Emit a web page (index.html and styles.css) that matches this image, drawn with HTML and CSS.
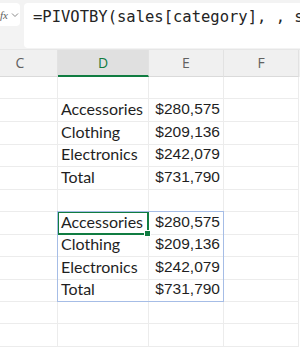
FILE: index.html
```html
<!DOCTYPE html>
<html lang="en">
<head>
  <meta charset="UTF-8" />
  <title>PIVOTBY</title>
  <link rel="stylesheet" href="styles.css">
</head>
<body>
<div class="toolbar">
  <div class="fx-box">
    <span class="fx">fx</span>
    <svg class="chev" width="8" height="6" viewBox="0 0 8 6"><path d="M1 1.5 L4 4.5 L7 1.5" fill="none" stroke="#8a8a8a" stroke-width="1"/></svg>
  </div>
  <div class="formula">=PIVOTBY(sales[category], , sales[amount], SUM)</div>
</div>

<div class="sheet">
  <div class="row head">
    <div class="hcell">C</div>
    <div class="hcell sel">D</div>
    <div class="hcell">E</div>
    <div class="hcell">F</div>
  </div>

  <div class="row"><div class="cell"></div><div class="cell"></div><div class="cell"></div><div class="cell"></div></div>
  <div class="row tall"><div class="cell"></div><div class="cell">Accessories</div><div class="cell num">$280,575</div><div class="cell"></div></div>
  <div class="row"><div class="cell"></div><div class="cell">Clothing</div><div class="cell num">$209,136</div><div class="cell"></div></div>
  <div class="row tall"><div class="cell"></div><div class="cell">Electronics</div><div class="cell num">$242,079</div><div class="cell"></div></div>
  <div class="row"><div class="cell"></div><div class="cell">Total</div><div class="cell num">$731,790</div><div class="cell"></div></div>
  <div class="row tall"><div class="cell"></div><div class="cell"></div><div class="cell"></div><div class="cell"></div></div>

  <!-- spilled copy, selected -->
  <div class="row"><div class="cell"></div><div class="cell active">Accessories</div><div class="cell num">$280,575</div><div class="cell"></div></div>
  <div class="row tall"><div class="cell"></div><div class="cell">Clothing</div><div class="cell num">$209,136</div><div class="cell"></div></div>
  <div class="row"><div class="cell"></div><div class="cell">Electronics</div><div class="cell num">$242,079</div><div class="cell"></div></div>
  <div class="row tall"><div class="cell"></div><div class="cell">Total</div><div class="cell num">$731,790</div><div class="cell"></div></div>
  <div class="row"><div class="cell"></div><div class="cell"></div><div class="cell"></div><div class="cell"></div></div>
  <div class="row tall"><div class="cell"></div><div class="cell"></div><div class="cell"></div><div class="cell"></div></div>

  <div class="spill"></div>
</div>
</body>
</html>
```

FILE: styles.css
```css
* { box-sizing: border-box; }
html, body { margin: 0; height: 100%; overflow: hidden; }
body {
  background: #fff;
  color: #1f1f1f;
  font-family: 'Liberation Sans', Arial, sans-serif;
}

.toolbar {
  height: 49px;
  background: #f3f3f3;
  display: flex;
  gap: 4px;
  padding-top: 3px;
  overflow: hidden;
}
.fx-box {
  width: 20px;
  height: 23px;
  background: #fff;
  border-radius: 0 4px 4px 0;
  display: flex;
  align-items: center;
  gap: 3px;
  flex-shrink: 0;
}
.fx {
  font-family: 'Liberation Serif', serif;
  font-style: italic;
  font-size: 11px;
  color: #616161;
  margin-left: 0;
}
.chev { margin-top: 1px; }
.formula {
  flex: 1;
  height: 45px;
  background: #fff;
  border-radius: 4px 0 0 4px;
  font-family: 'DejaVu Sans Mono', monospace;
  font-size: 15.5px;
  color: #242424;
  padding: 5px 0 0 9px;
  white-space: nowrap;
  overflow: hidden;
}

.sheet {
  position: relative;
  margin-left: -17px;
}
.row {
  display: grid;
  grid-template-columns: 75px 91px 75px 75px;
  height: 22px;
}
.row.tall { height: 23px; }

.head {
  height: 28px;
  background: #f0f0f0;
  border-top: 1px solid #e6e6e6;
}
.hcell {
  font-family: 'Open Sans', sans-serif;
  font-size: 14px;
  color: #616161;
  text-align: center;
  line-height: 25px;
  border-right: 1px solid #e2e2e2;
  border-bottom: 1px solid #dadada;
}
.hcell.sel {
  background: #e0e0e0;
  color: #107c41;
  border-bottom: 2px solid #107c41;
}

.cell {
  font-family: 'Lato', sans-serif;
  font-size: 16px;
  padding: 0 3px;
  display: flex;
  align-items: flex-end;
  padding-bottom: 3px;
  border-right: 1px solid #ececec;
  border-bottom: 1px solid #ececec;
  white-space: nowrap;
}
.cell.num {
  justify-content: flex-end;
  font-family: 'Liberation Sans', Arial, sans-serif;
  font-size: 15.5px;
}
.cell.active {
  position: relative;
}
.cell.active::before {
  content: '';
  position: absolute;
  left: -1px; top: -1px; right: -1px; bottom: -1px;
  border: 2px solid #107c41;
  border-radius: 1px;
}
.cell.active::after {
  content: '';
  position: absolute;
  right: -3px; bottom: -3px;
  width: 5px; height: 5px;
  background: #107c41;
  border: 1px solid #fff;
}

.spill {
  position: absolute;
  left: 74px;
  top: 162px;
  width: 167px;
  height: 91px;
  border: 1px solid #a6bde6;
  pointer-events: none;
}
```
